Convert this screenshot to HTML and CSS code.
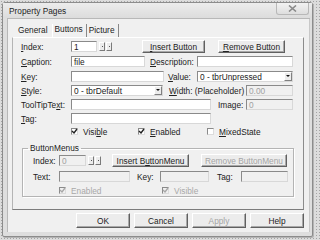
FILE: index.html
```html
<!DOCTYPE html>
<html lang="en">
  <head>
    <meta charset="UTF-8" />
    <meta name="viewport" content="width=device-width, initial-scale=1.0" />
    <title>Property Pages</title>
    <link rel="stylesheet" href="styles.css">
  </head>
  <body>
    <div class="window">
      <div class="titlebar">
        <span class="title">Property Pages</span>
        <span class="close">
          <svg width="9" height="7" viewBox="0 0 9 7"><path d="M1 0.5 L8 6.5 M8 0.5 L1 6.5" stroke="#8a8a8a" stroke-width="1.6" fill="none"/></svg>
        </span>
      </div>

      <div class="client">
        <div class="tabs">
          <span class="tab">General</span>
          <span class="tab active">Buttons</span>
          <span class="tab last">Picture</span>
        </div>

        <div class="page">
          <div class="row r1">
            <label class="lbl"><u>I</u>ndex:</label>
            <span class="field w26">1</span>
            <span class="spin"><span class="sb"></span><span class="sb"></span></span>
            <button class="btn w63 ml30"><u>I</u>nsert Button</button>
            <button class="btn w67 ml13"><u>R</u>emove Button</button>
          </div>

          <div class="row">
            <label class="lbl"><u>C</u>aption:</label>
            <span class="field w74">file</span>
            <label class="lbl2 ml5 w47"><u>D</u>escription:</label>
            <span class="field w96"></span>
          </div>

          <div class="row mt4">
            <label class="lbl"><u>K</u>ey:</label>
            <span class="field w93"></span>
            <label class="lbl2 ml4 w29"><u>V</u>alue:</label>
            <span class="combo w96"><span class="val">0 - tbrUnpressed</span><span class="arrow"></span></span>
          </div>

          <div class="row">
            <label class="lbl"><u>S</u>tyle:</label>
            <span class="combo w92"><span class="val">0 - tbrDefault</span><span class="arrow"></span></span>
            <label class="lbl2 ml6 w77"><u>W</u>idth: (Placeholder)</label>
            <span class="field off w47">0.00</span>
          </div>

          <div class="row">
            <label class="lbl">ToolTipTe<u>x</u>t:</label>
            <span class="field w140"></span>
            <label class="lbl2 ml7 w28">Image:</label>
            <span class="field off w47">0</span>
          </div>

          <div class="row">
            <label class="lbl"><u>T</u>ag:</label>
            <span class="field w140"></span>
          </div>

          <div class="row checks">
            <span class="lbl"></span>
            <span class="check w67"><span class="box"><svg width="7" height="7" viewBox="0 0 7 7"><path d="M1 3 L3 5 L6 1" stroke="#222" stroke-width="1.4" fill="none"/></svg></span>Visi<u>b</u>le</span>
            <span class="check w69"><span class="box"><svg width="7" height="7" viewBox="0 0 7 7"><path d="M1 3 L3 5 L6 1" stroke="#222" stroke-width="1.4" fill="none"/></svg></span><u>E</u>nabled</span>
            <span class="check"><span class="box"></span><u>M</u>ixedState</span>
          </div>

          <fieldset class="group">
            <legend>ButtonMenus</legend>

            <div class="row g1">
              <label class="glbl">Index:</label>
              <span class="field off w27">0</span>
              <span class="spin"><span class="sb"></span><span class="sb"></span></span>
              <button class="btn w77 ml11">Insert B<u>u</u>ttonMenu</button>
              <button class="btn off w86 ml12">Remove ButtonMenu</button>
            </div>

            <div class="row g2">
              <label class="glbl">Text:</label>
              <span class="field off w71"></span>
              <label class="lbl2 ml7 w23">Key:</label>
              <span class="field off w49"></span>
              <label class="lbl2 ml8 w24">Tag:</label>
              <span class="field off w47"></span>
            </div>

            <div class="row checks g3">
              <span class="glbl"></span>
              <span class="check off w103"><span class="box"><svg width="7" height="7" viewBox="0 0 7 7"><path d="M1 3 L3 5 L6 1" stroke="#a8a8a8" stroke-width="1.4" fill="none"/></svg></span>Enabled</span>
              <span class="check off"><span class="box"><svg width="7" height="7" viewBox="0 0 7 7"><path d="M1 3 L3 5 L6 1" stroke="#a8a8a8" stroke-width="1.4" fill="none"/></svg></span>Visible</span>
            </div>
          </fieldset>
        </div>

        <div class="actions">
          <button class="btn act">OK</button>
          <button class="btn act">Cancel</button>
          <button class="btn act off">Apply</button>
          <button class="btn act">Help</button>
        </div>
      </div>
    </div>
  </body>
</html>
```

FILE: styles.css
```css
body {
  margin: 0;
  width: 320px;
  height: 240px;
  overflow: hidden;
  background-color: #dcdcdc;
  background-image: radial-gradient(#a4a4a4 0.7px, transparent 0.9px);
  background-size: 3px 3px;
  font-family: "Liberation Sans", Arial, sans-serif;
  font-size: 8.3px;
  color: #222;
}

.window {
  margin: 2px 0 0 2px;
  width: 311px;
  height: 235px;
  box-sizing: border-box;
  border: 1px solid #8c8c8c;
  border-radius: 3px 3px 2px 2px;
  background: #dedede;
  padding: 0 2px 4px 4px;
  box-shadow: 1px 1px 0 #b4b4b4;
}

.titlebar {
  display: flex;
  height: 15px;
  margin-left: -4px;
  margin-right: -2px;
  padding-left: 6px;
  background: linear-gradient(#ececec, #dcdcdc);
}

.title {
  line-height: 16px;
  color: #1e1e1e;
}

.close {
  margin-left: auto;
  margin-right: 3px;
  width: 31px;
  height: 11px;
  display: flex;
  align-items: center;
  justify-content: center;
  border: 1px solid #b8b8b8;
  border-top: none;
  border-radius: 0 0 3px 3px;
  background: linear-gradient(#f2f2f2, #dedede);
}

.client {
  height: 214px;
  background: #f0f0f0;
  box-shadow: inset 1px 1px 0 #b8b8b8, inset -1px 0 0 #c8c8c8;
  padding-top: 6px;
  box-sizing: border-box;
}

/* tab strip */
.tabs {
  display: flex;
  height: 13px;
  margin-left: 6px;
}

.tab {
  padding: 0 4px 0 5px;
  line-height: 13px;
}

.tab.active {
  padding: 0 3px 0 2px;
  line-height: 11px;
  border-left: 1px solid #fff;
  border-right: 1px solid #888;
}

.tab.last {
  padding: 0 3px 0 2px;
  border-right: 1px solid #888;
}

.page {
  margin-left: 5px;
  width: 292px;
  height: 173px;
  box-sizing: border-box;
  border: 1px solid;
  border-color: #fff #8c8c8c #7c7c7c #b4b4b4;
  padding: 0 0 0 8px;
}

.row {
  display: flex;
  align-items: center;
  height: 11px;
  margin-top: 3px;
}

.row.r1 {
  height: 13px;
  margin-top: 2px;
}

.row.mt4 {
  margin-top: 4px;
}

.lbl {
  width: 50px;
  flex: none;
}

.lbl2 {
  flex: none;
  white-space: nowrap;
}

.glbl {
  width: 26px;
  flex: none;
}

.field,
.combo {
  display: flex;
  align-items: center;
  height: 11px;
  box-sizing: border-box;
  border: 1px solid;
  border-color: #8a8a8a #d8d8d8 #d8d8d8 #8a8a8a;
  background: #fff;
  padding-left: 2px;
  flex: none;
  overflow: hidden;
  white-space: nowrap;
}

.field.off {
  background: #f0f0f0;
  color: #a0a0a0;
}

.combo .val {
  flex: 1;
}

.combo .arrow {
  width: 8px;
  height: 9px;
  box-sizing: border-box;
  border: 1px solid;
  border-color: #fff #808080 #808080 #fff;
  background: #ececec;
  position: relative;
}

.combo .arrow::after {
  content: "";
  position: absolute;
  left: 1px;
  top: 2px;
  border-left: 2px solid transparent;
  border-right: 2px solid transparent;
  border-top: 2px solid #111;
}

.spin {
  display: flex;
  gap: 1px;
  margin-left: 2px;
}

.sb {
  width: 6px;
  height: 9px;
  box-sizing: border-box;
  border: 1px solid;
  border-color: #fff #7a7a7a #7a7a7a #fff;
  background: radial-gradient(#555 0.6px, transparent 0.9px) center / 3px 3px no-repeat #ececec;
}

.btn {
  height: 13px;
  box-sizing: border-box;
  padding: 0;
  border: 1px solid;
  border-color: #fff #606060 #606060 #fff;
  box-shadow: inset -1px -1px 0 #a8a8a8;
  background: #ececec;
  font-family: inherit;
  font-size: 8.3px;
  color: #222;
  line-height: 10px;
  flex: none;
}

.btn.off {
  color: #a4a4a4;
}

.checks {
  height: 9px;
}

.check {
  display: flex;
  align-items: center;
  flex: none;
}

.check .box {
  width: 7px;
  height: 7px;
  box-sizing: border-box;
  border: 1px solid;
  border-color: #8a8a8a #dcdcdc #dcdcdc #8a8a8a;
  background: #fff;
  display: flex;
  align-items: center;
  justify-content: center;
  margin-right: 5px;
}

.check .box svg {
  flex: none;
}

.check.off {
  color: #a8a8a8;
}

.check.off .box {
  background: #f0f0f0;
}

.group {
  margin: 7px 0 0 1px;
  padding: 0 0 1px 10px;
  width: 272px;
  box-sizing: border-box;
  min-width: 0;
  border: 1px solid #b4b4b4;
  box-shadow: 1px 1px 0 #fff, inset 1px 1px 0 #fff;
}

.group legend {
  margin-left: -5px;
  padding: 0 2px;
  line-height: 10px;
}

.row.g1 {
  height: 13px;
  margin-top: 1px;
}

.row.g2,
.row.g3 {
  margin-top: 4px;
}

.row.g3 {
  height: 9px;
}

.actions {
  display: flex;
  justify-content: flex-end;
  gap: 4px;
  margin: 3px 6px 0 0;
}

.btn.act {
  width: 54px;
  height: 15px;
}

.w23 { width: 23px; }
.w24 { width: 24px; }
.w26 { width: 26px; }
.w27 { width: 27px; }
.w28 { width: 28px; }
.w29 { width: 29px; }
.w47 { width: 47px; }
.w49 { width: 49px; }
.w63 { width: 63px; }
.w67 { width: 67px; }
.w69 { width: 69px; }
.w71 { width: 71px; }
.w74 { width: 74px; }
.w77 { width: 77px; }
.w86 { width: 86px; }
.w92 { width: 92px; }
.w93 { width: 93px; }
.w96 { width: 96px; }
.w103 { width: 103px; }
.w140 { width: 140px; }

.ml4 { margin-left: 4px; }
.ml5 { margin-left: 5px; }
.ml6 { margin-left: 6px; }
.ml7 { margin-left: 7px; }
.ml8 { margin-left: 8px; }
.ml11 { margin-left: 11px; }
.ml12 { margin-left: 12px; }
.ml13 { margin-left: 13px; }
.ml30 { margin-left: 30px; }
```
